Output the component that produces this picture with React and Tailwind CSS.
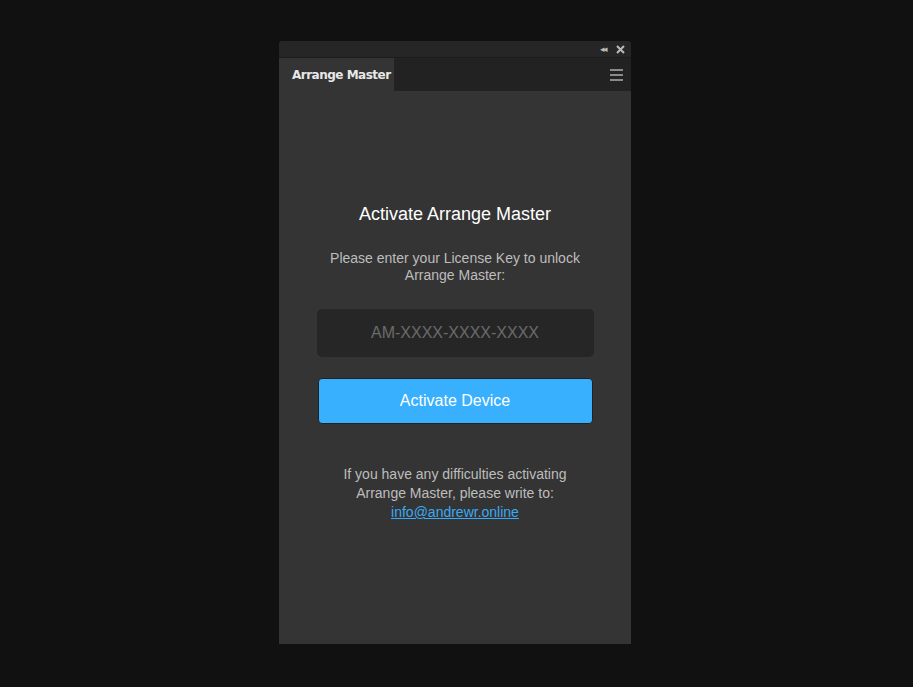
export default function App() {
  return (
    <div className="w-[913px] h-[687px] bg-[#111111] relative" style={{fontFamily:'"Liberation Sans", Arial, sans-serif'}}>
      <div className="absolute left-[279px] top-[41px] w-[352px] h-[603px] flex flex-col bg-[#343434] rounded-t-[4px] overflow-hidden">
        <div className="h-[17px] bg-[#262626] flex items-center justify-end pr-[6px] gap-[10px] border-b border-[#1c1c1c]">
          <span className="text-[#bbbbbb] text-[9px] leading-none tracking-[-2px]">◂◂</span>
          <svg width="9" height="9" viewBox="0 0 9 9"><path d="M1 1L8 8M8 1L1 8" stroke="#bbbbbb" strokeWidth="2"/></svg>
        </div>
        <div className="h-[33px] bg-[#222222] flex items-stretch justify-between">
          <div className="w-[115px] bg-[#343434] flex items-center pl-[13px] text-[12px] font-bold text-[#e8e8e8]" style={{fontFamily:'"DejaVu Sans", sans-serif', letterSpacing:'-0.5px'}}>Arrange Master</div>
          <div className="flex flex-col justify-center gap-[3px] pr-[8px]">
            <div className="w-[13px] h-[2px] bg-[#8a8a8a]"></div>
            <div className="w-[13px] h-[2px] bg-[#8a8a8a]"></div>
            <div className="w-[13px] h-[2px] bg-[#8a8a8a]"></div>
          </div>
        </div>
        <div className="flex flex-col items-center pt-[111px]">
          <div className="text-[18px] text-white leading-[24px]">Activate Arrange Master</div>
          <div className="mt-[24px] text-[14px] leading-[17px] text-[#bdbdbd] text-center w-[260px]">Please enter your License Key to unlock Arrange Master:</div>
          <div className="mt-[25px] w-[277px] h-[48px] rounded-[5px] bg-[#262626] flex items-center justify-center text-[16px] text-[#6b6b6b]">AM-XXXX-XXXX-XXXX</div>
          <div className="mt-[21px] w-[275px] h-[46px] rounded-[4px] bg-[#38b0fd] flex items-center justify-center text-[16px] text-white border border-[#222]">Activate Device</div>
          <div className="mt-[41px] text-[14px] leading-[19px] text-[#bdbdbd] text-center w-[260px]">If you have any difficulties activating Arrange Master, please write to:<br/><span className="text-[#3aaaf5] underline">info@andrewr.online</span></div>
        </div>
      </div>
    </div>
  );
}
